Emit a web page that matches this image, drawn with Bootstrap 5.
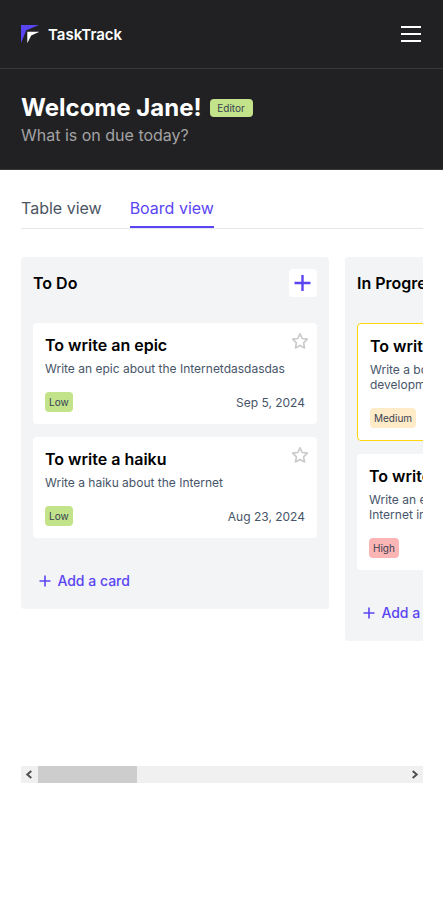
<!DOCTYPE html>
<html lang="en">
<head>
<meta charset="utf-8">
<meta name="viewport" content="width=device-width, initial-scale=1">
<title>TaskTrack</title>
<link href="https://cdn.jsdelivr.net/npm/bootstrap@5.3.0/dist/css/bootstrap.min.css" rel="stylesheet">
<style>
body{font-family:Inter,"Liberation Sans",sans-serif;color:#000;background:#fff}
.topbar{height:69px;padding:0 21px;background:#212123;border-bottom:1px solid #39393b}
.brand-name{font-size:15px;font-weight:600;line-height:20px;margin-left:9px;padding-top:2px}
.brand-link svg,.menu-btn svg,.star-btn svg,.plus-btn svg,.add-card svg{display:block}
.hero{height:101px;padding:24px 21px 0;background:#212123;border-bottom:1px solid #39393b}
.hero h1{font-size:24px;font-weight:700;line-height:30px}
.hero p{font-size:16px;line-height:20px;color:#a3a3a3;margin-top:2px}
.role{font-size:10px;font-weight:400;line-height:18px;width:43px;height:18px;padding:0;border-radius:4px;background:#c2e38a;color:#374151;margin-left:8px}
.page{padding:0 20px 0 21px}
.views{height:59px;gap:28px;border-bottom:1px solid #e5e7eb}
.views .nav-link{font-size:16px;line-height:20px;padding:28px 0 0;height:58px;color:#4b5563}
.views .nav-link.active{color:#5a45f2;border-bottom:2px solid #5a45f2}
.board{height:509px;margin-top:28px;gap:16px}
.lane{width:308px;padding:12px 12px 17px;background:#f3f4f6;border-radius:4px}
.lane-head{height:28px;margin-bottom:26px}
.lane-head h2{font-size:16px;font-weight:600;line-height:20px}
.plus-btn{width:28px;height:28px;border-radius:4px}
.tasks{gap:13px}
.task{padding:12px;border:0;border-radius:4px;color:#000}
.task.starred{border:1px solid #ffd60a}
.task h3{font-size:16px;font-weight:600;line-height:20px;margin-bottom:6px}
.task p{font-size:12px;line-height:15px;margin-bottom:16px;color:#475569}
.star-btn{margin:-3px -4px -15px 0}
.prio{font-size:10px;font-weight:400;line-height:21px;height:20px;padding:0 4px;border-radius:4px;color:#374151}
.prio-low{background:#c2e38a}.prio-medium{background:#ffebc8}.prio-high{background:#fcb5b5}
.due{font-size:12px;line-height:22px;height:20px;color:#475569}
.add-card{font-size:14px;font-weight:500;line-height:20px;color:#5a45f2;gap:6.4px;margin:32px 0 0 6px;height:22px;padding-bottom:1px}
.scroller{height:17px;background:#f0f0f0}
.scroll-arrow{width:17px;height:17px}
.scroll-thumb{width:99px;background:#cdcdcd}
</style>
<script src="https://cdn.jsdelivr.net/npm/bootstrap@5.3.0/dist/js/bootstrap.bundle.min.js"></script>
</head>
<body>
<svg class="d-none" xmlns="http://www.w3.org/2000/svg">
<symbol id="star" viewBox="0 0 18 18"><path d="M9 1.8l2.2 4.7 5.1.7-3.7 3.6.9 5.1L9 13.4l-4.5 2.5.9-5.1L1.7 7.2l5.1-.7z" fill="none" stroke="#cbcbcb" stroke-width="1.7" stroke-linejoin="round"/></symbol>
<symbol id="plus" viewBox="0 0 12 12"><path d="M6 .5v11M.5 6h11" fill="none" stroke="#5a45f2" stroke-width="1.6"/></symbol>
</svg>
<header class="topbar d-flex align-items-center justify-content-between">
<a class="brand-link d-flex align-items-center text-white text-decoration-none" href="#">
<svg width="18" height="18" viewBox="0 0 18 18"><path d="M0 0H18L5.3 5.3 0 18z" fill="#5a45f2"/><path d="M6.3 6.8H18.2L10.2 10.6 6.3 18.2z" fill="#fff"/></svg>
<span class="brand-name">TaskTrack</span></a>
<button class="menu-btn btn p-0 border-0" aria-label="Menu"><svg width="21" height="18" viewBox="0 0 21 18"><path d="M0 2h20M0 9h20M0 16h20" stroke="#fff" stroke-width="2"/></svg></button>
</header>
<section class="hero">
<div class="d-flex align-items-center"><h1 class="text-white mb-0">Welcome Jane!</h1><span class="role badge">Editor</span></div>
<p class="mb-0">What is on due today?</p>
</section>
<main class="page">
<nav class="views nav"><a class="nav-link" href="#">Table view</a><a class="nav-link active" href="#">Board view</a></nav>
<div class="board d-flex align-items-start overflow-hidden">
<section class="lane flex-shrink-0">
<div class="lane-head d-flex align-items-center justify-content-between"><h2 class="mb-0">To Do</h2><button class="plus-btn btn bg-white border-0 p-0 d-flex align-items-center justify-content-center" aria-label="Add"><svg width="18" height="18" viewBox="0 0 18 18"><path d="M8.5 1v16M.5 9h16" stroke="#5a45f2" stroke-width="2.4"/></svg></button></div>
<div class="tasks d-flex flex-column">
<article class="task card"><div class="d-flex justify-content-between align-items-start"><h3>To write an epic</h3><span class="star-btn"><svg width="18" height="18"><use href="#star"/></svg></span></div><p>Write an epic about the Internetdasdasdas</p><div class="d-flex justify-content-between"><span class="prio prio-low">Low</span><span class="due">Sep 5, 2024</span></div></article>
<article class="task card"><div class="d-flex justify-content-between align-items-start"><h3>To write a haiku</h3><span class="star-btn"><svg width="18" height="18"><use href="#star"/></svg></span></div><p>Write a haiku about the Internet</p><div class="d-flex justify-content-between"><span class="prio prio-low">Low</span><span class="due">Aug 23, 2024</span></div></article>
</div>
<a class="add-card d-flex align-items-center text-decoration-none" href="#"><svg width="12" height="12"><use href="#plus"/></svg>Add a card</a>
</section>
<section class="lane flex-shrink-0">
<div class="lane-head d-flex align-items-center"><h2 class="mb-0">In Progress</h2></div>
<div class="tasks d-flex flex-column">
<article class="task starred card"><h3>To write a book</h3><p>Write a book about web<br>development</p><div class="d-flex"><span class="prio prio-medium">Medium</span></div></article>
<article class="task card"><h3>To write an essay</h3><p>Write an essay about the<br>Internet in general</p><div class="d-flex"><span class="prio prio-high">High</span></div></article>
</div>
<a class="add-card d-flex align-items-center text-decoration-none" href="#"><svg width="12" height="12"><use href="#plus"/></svg>Add a card</a>
</section>
</div>
<div class="scroller d-flex">
<svg class="scroll-arrow" viewBox="0 0 17 17"><path d="M10.3 5L6.3 8.5l4 3.5" fill="none" stroke="#505050" stroke-width="2"/></svg>
<div class="scroll-thumb"></div>
<svg class="scroll-arrow ms-auto" viewBox="0 0 17 17"><path d="M6.7 5l4 3.5-4 3.5" fill="none" stroke="#505050" stroke-width="2"/></svg>
</div>
</main>
</body>
</html>
